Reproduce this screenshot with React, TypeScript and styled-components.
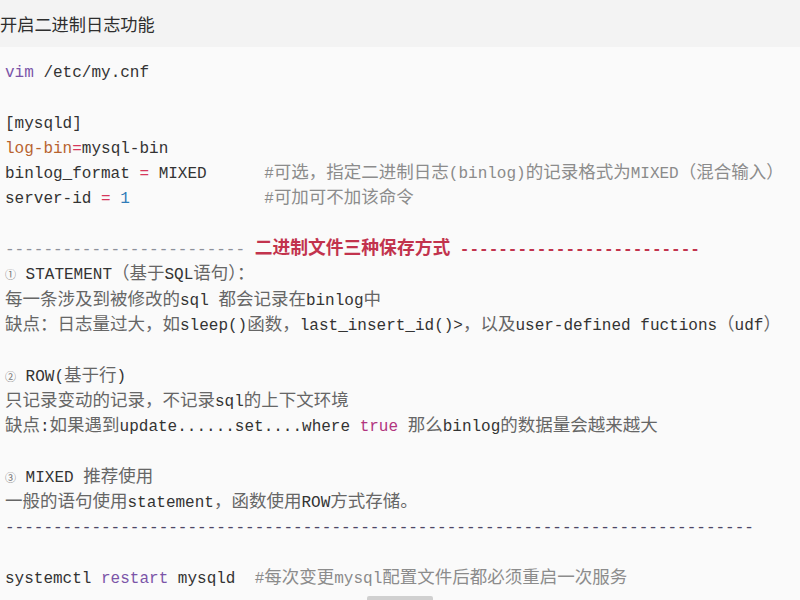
import React from "react";
import styled, { createGlobalStyle } from "styled-components";

const Global = createGlobalStyle`
  html, body { margin: 0; padding: 0; background: #fafafa; }
  body { width: 800px; height: 600px; overflow: hidden; }
`;

const Page = styled.div`
  position: relative;
  width: 800px;
  height: 600px;
  overflow: hidden;
  background: #fafafa;
`;

const Header = styled.div`
  height: 47px;
  background: #f3f3f3;
  display: flex;
  align-items: center;
  font-family: "Noto Sans CJK SC", "Noto Sans", sans-serif;
  font-size: 17.2px;
  color: #2e2e2e;
  padding-left: 0;
`;

const Code = styled.div`
  padding: 14px 5px 0 5px;
  font-family: "Liberation Mono", "DejaVu Sans Mono", monospace;
  font-size: 16px;
  color: #333;
`;

const Line = styled.div`
  height: 25.3px;
  line-height: 25.3px;
  white-space: pre;
`;

type Tone = "p" | "kw" | "attr" | "op" | "num" | "bool" | "cm" | "red" | "dash1" | "dash2" | "circ";

const toneColor: Record<Tone, string> = {
  p: "#333",
  kw: "#7b55a8",
  attr: "#b8632f",
  op: "#d6385c",
  num: "#2f7cb8",
  bool: "#b2357f",
  cm: "#8a8a8a",
  red: "#c2334d",
  dash1: "#8d919b",
  dash2: "#4d4766",
  circ: "#777",
};

const cjkColor: Record<Tone, string> = {
  p: "#666",
  kw: "#666",
  attr: "#666",
  op: "#666",
  num: "#666",
  bool: "#666",
  cm: "#8c8c8c",
  red: "#c2334d",
  dash1: "#666",
  dash2: "#666",
  circ: "#777",
};

const Seg = styled.span<{ $tone: Tone }>`
  color: ${(p) => toneColor[p.$tone]};
  font-weight: ${(p) => (p.$tone === "red" ? 700 : 400)};
`;

const Cjk = styled.span<{ $tone: Tone; $size?: number }>`
  font-family: "Noto Sans CJK SC", sans-serif;
  font-size: ${(p) => p.$size ?? 17.5}px;
  line-height: 1;
  color: ${(p) => cjkColor[p.$tone]};
`;

const Circ = styled.span`
  font-family: "Noto Sans CJK SC", sans-serif;
  font-size: 11px;
  line-height: 1;
  color: #777;
`;

const Scroll = styled.div`
  position: absolute;
  left: 367px;
  bottom: 0;
  width: 66px;
  height: 4px;
  background: #d0d0d0;
  border-radius: 2px 2px 0 0;
`;

const CJK_RE = /([\u3000-\u303f\u4e00-\u9fff\uff00-\uffef]+)/;

function Rich({ text, tone, size }: { text: string; tone: Tone; size?: number }) {
  if (tone === "circ") return <Circ>{text}</Circ>;
  const parts = text.split(CJK_RE);
  return (
    <Seg $tone={tone}>
      {parts.map((part, i) =>
        i % 2 === 1 ? (
          <Cjk key={i} $tone={tone} $size={size}>
            {part}
          </Cjk>
        ) : (
          <React.Fragment key={i}>{part}</React.Fragment>
        )
      )}
    </Seg>
  );
}

type S = [string, Tone, number?];

const dash = (n: number) => "-".repeat(n);

const lines: S[][] = [
  [["vim", "kw"], [" /etc/my.cnf", "p"]],
  [],
  [["[mysqld]", "p"]],
  [["log-bin", "attr"], ["=", "op"], ["mysql-bin", "p"]],
  [["binlog_format ", "p"], ["=", "op"], [" MIXED      ", "p"], ["#可选，指定二进制日志(binlog)的记录格式为MIXED（混合输入）", "cm"]],
  [["server-id ", "p"], ["=", "op"], [" ", "p"], ["1", "num"], ["              ", "p"], ["#可加可不加该命令", "cm"]],
  [],
  [[dash(25) + " ", "dash1"], ["二进制文件三种保存方式", "red", 17.8], [" " + dash(25), "red"]],
  [["①", "circ"], [" STATEMENT（基于SQL语句）：", "p"]],
  [["每一条涉及到被修改的sql 都会记录在binlog中", "p"]],
  [["缺点：日志量过大，如sleep()函数，last_insert_id()>，以及user-defined fuctions（udf）", "p"]],
  [],
  [["②", "circ"], [" ROW(基于行)", "p"]],
  [["只记录变动的记录，不记录sql的上下文环境", "p"]],
  [["缺点:如果遇到update......set....where ", "p"], ["true", "bool"], [" 那么binlog的数据量会越来越大", "p"]],
  [],
  [["③", "circ"], [" MIXED 推荐使用", "p"]],
  [["一般的语句使用statement，函数使用ROW方式存储。", "p"]],
  [[dash(78), "dash2"]],
  [],
  [["systemctl ", "p"], ["restart", "kw"], [" mysqld  ", "p"], ["#每次变更mysql配置文件后都必须重启一次服务", "cm"]],
];

export default function App() {
  return (
    <Page>
      <Global />
      <Header>开启二进制日志功能</Header>
      <Code>
        {lines.map((segs, i) => (
          <Line key={i}>
            {segs.length === 0
              ? " "
              : segs.map(([t, tone, size], j) => <Rich key={j} text={t} tone={tone} size={size} />)}
          </Line>
        ))}
      </Code>
      <Scroll />
    </Page>
  );
}
